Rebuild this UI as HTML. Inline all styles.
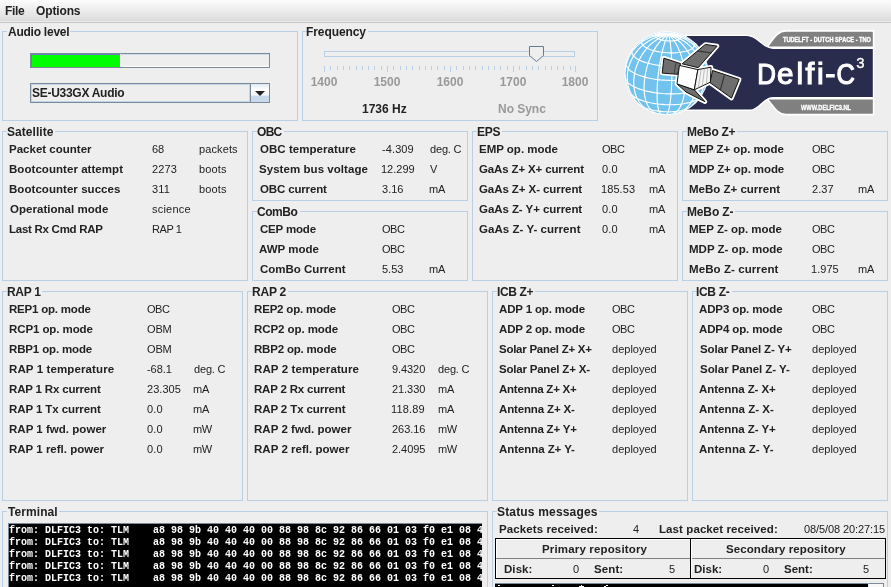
<!DOCTYPE html><html><head><meta charset="utf-8"><style>
*{margin:0;padding:0;box-sizing:border-box}
html,body{width:891px;height:587px;overflow:hidden;background:#eeeeee;font-family:"Liberation Sans",sans-serif;color:#222}
.a{position:absolute;white-space:pre}
.pb{position:absolute;border:1px solid #b8cfe5}
.tt{position:absolute;font:bold 12px/14px "Liberation Sans",sans-serif;white-space:nowrap}
.l,.v,.tt{will-change:transform}
.l{position:absolute;font:bold 11.5px/14px "Liberation Sans",sans-serif;white-space:nowrap}
.v{position:absolute;font:11px/14px "Liberation Sans",sans-serif;white-space:nowrap}
</style></head><body><div class="a" style="left:0;top:0;width:891px;height:21px;background:linear-gradient(#fcfcfc,#dcdcdc)"></div>
<div class="a" style="left:0;top:21px;width:891px;height:1px;background:#ebebeb"></div>
<div class="a" style="left:0;top:22px;width:891px;height:1px;background:#c6c6c6"></div>
<div id="t0" class="l" style="left:5.05px;top:4px;letter-spacing:-0.304px;font-size:12px">File</div>
<div id="t1" class="l" style="left:35.83px;top:4px;letter-spacing:-0.134px;font-size:12px">Options</div>
<div class="pb" style="left:2px;top:31px;width:296px;height:90px"></div>
<div class="a" style="left:7px;top:30px;height:3px;background:#eeeeee;width:63px;"></div>
<div id="t2" class="tt" style="left:7.93px;top:25px;letter-spacing:-0.243px;">Audio level</div>
<div class="a" style="left:30px;top:53px;width:240px;height:15px;border:1px solid #7a8a99;background:#eeeeee"></div>
<div class="a" style="left:121px;top:54px;width:148px;height:1px;background:#cddcec"></div>
<div class="a" style="left:121px;top:66px;width:148px;height:1px;background:#ffffff"></div>
<div class="a" style="left:31px;top:54px;width:89px;height:13px;background:#00ff00;border-top:1px solid #6b7cc4;border-left:1px solid #6b7cc4"></div>
<div class="a" style="left:120px;top:54px;width:1px;height:13px;background:#ffffff"></div>
<div class="a" style="left:30px;top:83px;width:240px;height:20px;border:1px solid #7a8a99;background:#eeeeee;box-shadow:inset 1px 1px 0 #c2d6ea,inset -1px -1px 0 #c2d6ea"></div>
<div class="a" style="left:250px;top:83px;width:20px;height:20px;border:1px solid #7a8a99;background:linear-gradient(#dde8f3 0px,#f2f6fa 3px,#ffffff 6px,#ffffff 8px,#e4edf5 12px,#e4edf5 12.5px,#c8daeb 12.5px,#c8daeb 100%)"></div>
<div class="a" style="left:249px;top:84px;width:1px;height:18px;background:#c2d6ea"></div>
<svg class="a" style="left:254px;top:90px" width="12" height="7"><path d="M1 1 L11 1 L6 6 Z" fill="#222"/></svg>
<div id="t3" class="l" style="left:31.76px;top:86px;letter-spacing:-0.281px;font-size:12px">SE-U33GX Audio</div>
<div class="pb" style="left:302px;top:31px;width:296px;height:90px"></div>
<div class="a" style="left:307px;top:30px;height:3px;background:#eeeeee;width:61px;"></div>
<div id="t4" class="tt" style="left:306.35px;top:25px;letter-spacing:-0.082px;">Frequency</div>
<div class="a" style="left:324px;top:51px;width:251px;height:6px;border:1px solid #b8cfe5"></div>
<svg class="a" style="left:0;top:0" width="891" height="120"><rect x="324" y="66" width="1" height="6" fill="#b8cfe5"/><rect x="330" y="66" width="1" height="4" fill="#b8cfe5"/><rect x="337" y="66" width="1" height="4" fill="#b8cfe5"/><rect x="343" y="66" width="1" height="4" fill="#b8cfe5"/><rect x="349" y="66" width="1" height="4" fill="#b8cfe5"/><rect x="356" y="66" width="1" height="4" fill="#b8cfe5"/><rect x="362" y="66" width="1" height="4" fill="#b8cfe5"/><rect x="368" y="66" width="1" height="4" fill="#b8cfe5"/><rect x="374" y="66" width="1" height="4" fill="#b8cfe5"/><rect x="381" y="66" width="1" height="4" fill="#b8cfe5"/><rect x="387" y="66" width="1" height="6" fill="#b8cfe5"/><rect x="393" y="66" width="1" height="4" fill="#b8cfe5"/><rect x="400" y="66" width="1" height="4" fill="#b8cfe5"/><rect x="406" y="66" width="1" height="4" fill="#b8cfe5"/><rect x="412" y="66" width="1" height="4" fill="#b8cfe5"/><rect x="419" y="66" width="1" height="4" fill="#b8cfe5"/><rect x="425" y="66" width="1" height="4" fill="#b8cfe5"/><rect x="431" y="66" width="1" height="4" fill="#b8cfe5"/><rect x="437" y="66" width="1" height="4" fill="#b8cfe5"/><rect x="444" y="66" width="1" height="4" fill="#b8cfe5"/><rect x="450" y="66" width="1" height="6" fill="#b8cfe5"/><rect x="456" y="66" width="1" height="4" fill="#b8cfe5"/><rect x="463" y="66" width="1" height="4" fill="#b8cfe5"/><rect x="469" y="66" width="1" height="4" fill="#b8cfe5"/><rect x="475" y="66" width="1" height="4" fill="#b8cfe5"/><rect x="482" y="66" width="1" height="4" fill="#b8cfe5"/><rect x="488" y="66" width="1" height="4" fill="#b8cfe5"/><rect x="494" y="66" width="1" height="4" fill="#b8cfe5"/><rect x="500" y="66" width="1" height="4" fill="#b8cfe5"/><rect x="507" y="66" width="1" height="4" fill="#b8cfe5"/><rect x="513" y="66" width="1" height="6" fill="#b8cfe5"/><rect x="519" y="66" width="1" height="4" fill="#b8cfe5"/><rect x="526" y="66" width="1" height="4" fill="#b8cfe5"/><rect x="532" y="66" width="1" height="4" fill="#b8cfe5"/><rect x="538" y="66" width="1" height="4" fill="#b8cfe5"/><rect x="545" y="66" width="1" height="4" fill="#b8cfe5"/><rect x="551" y="66" width="1" height="4" fill="#b8cfe5"/><rect x="557" y="66" width="1" height="4" fill="#b8cfe5"/><rect x="563" y="66" width="1" height="4" fill="#b8cfe5"/><rect x="570" y="66" width="1" height="4" fill="#b8cfe5"/><rect x="575" y="66" width="1" height="6" fill="#b8cfe5"/></svg>
<div class="l" style="left:304.0px;top:75px;width:40px;text-align:center;color:#999999;font-size:12px">1400</div>
<div class="l" style="left:367.0px;top:75px;width:40px;text-align:center;color:#999999;font-size:12px">1500</div>
<div class="l" style="left:430.0px;top:75px;width:40px;text-align:center;color:#999999;font-size:12px">1600</div>
<div class="l" style="left:493.0px;top:75px;width:40px;text-align:center;color:#999999;font-size:12px">1700</div>
<div class="l" style="left:555.0px;top:75px;width:40px;text-align:center;color:#999999;font-size:12px">1800</div>
<svg class="a" style="left:528px;top:45px" width="18" height="18"><path d="M1.5 1.5 H15.5 V10.5 L8.5 16.5 L1.5 10.5 Z" fill="#eeeeee" stroke="#637c93" stroke-width="1"/></svg>
<div id="t5" class="l" style="left:362.38px;top:102px;font-size:12px">1736 Hz</div>
<div id="t6" class="l" style="left:498.15px;top:102px;letter-spacing:-0.031px;font-size:12px;color:#999999">No Sync</div>
<div class="pb" style="left:2px;top:131px;width:246px;height:150px"></div>
<div class="a" style="left:7px;top:130px;height:3px;background:#eeeeee;width:48px;"></div>
<div id="t7" class="tt" style="left:6.66px;top:125px;letter-spacing:0.042px;">Satellite</div>
<div id="t8" class="l" style="left:9.32px;top:142px;letter-spacing:0.011px;">Packet counter</div>
<div id="t9" class="v" style="left:151.60px;top:142px;">68</div>
<div id="t10" class="v" style="left:198.73px;top:142px;letter-spacing:0.106px;">packets</div>
<div id="t11" class="l" style="left:9.32px;top:162px;letter-spacing:0.051px;">Bootcounter attempt</div>
<div id="t12" class="v" style="left:152.00px;top:162px;letter-spacing:0.094px;">2273</div>
<div id="t13" class="v" style="left:198.77px;top:162px;letter-spacing:0.147px;">boots</div>
<div id="t14" class="l" style="left:9.32px;top:182px;letter-spacing:0.049px;">Bootcounter succes</div>
<div id="t15" class="v" style="left:152.25px;top:182px;letter-spacing:0.164px;">311</div>
<div id="t16" class="v" style="left:198.77px;top:182px;letter-spacing:0.147px;">boots</div>
<div id="t17" class="l" style="left:9.89px;top:202px;letter-spacing:0.034px;">Operational mode</div>
<div id="t18" class="v" style="left:151.51px;top:202px;letter-spacing:0.216px;">science</div>
<div id="t19" class="l" style="left:9.32px;top:222px;letter-spacing:-0.267px;">Last Rx Cmd RAP</div>
<div id="t20" class="v" style="left:151.71px;top:222px;letter-spacing:-0.421px;">RAP 1</div>
<div class="pb" style="left:252px;top:131px;width:216px;height:70px"></div>
<div class="a" style="left:257px;top:130px;height:3px;background:#eeeeee;width:27px;"></div>
<div id="t21" class="tt" style="left:257.00px;top:125px;letter-spacing:-0.702px;">OBC</div>
<div id="t22" class="l" style="left:259.89px;top:142px;letter-spacing:0.048px;">OBC temperature</div>
<div id="t23" class="v" style="left:381.99px;top:142px;letter-spacing:0.104px;">-4.309</div>
<div id="t24" class="v" style="left:429.58px;top:142px;letter-spacing:-0.172px;">deg. C</div>
<div id="t25" class="l" style="left:259.06px;top:162px;letter-spacing:0.053px;">System bus voltage</div>
<div id="t26" class="v" style="left:381.49px;top:162px;letter-spacing:-0.001px;">12.299</div>
<div id="t27" class="v" style="left:429.54px;top:162px;">V</div>
<div id="t28" class="l" style="left:259.89px;top:182px;letter-spacing:-0.152px;">OBC current</div>
<div id="t29" class="v" style="left:382.36px;top:182px;letter-spacing:0.009px;">3.16</div>
<div id="t30" class="v" style="left:429.31px;top:182px;letter-spacing:-0.197px;">mA</div>
<div class="pb" style="left:252px;top:211px;width:216px;height:70px"></div>
<div class="a" style="left:257px;top:210px;height:3px;background:#eeeeee;width:43px;"></div>
<div id="t31" class="tt" style="left:257.00px;top:205px;letter-spacing:-0.449px;">ComBo</div>
<div id="t32" class="l" style="left:259.89px;top:222px;letter-spacing:-0.183px;">CEP mode</div>
<div id="t33" class="v" style="left:381.99px;top:222px;letter-spacing:-0.487px;">OBC</div>
<div id="t34" class="l" style="left:259.06px;top:242px;letter-spacing:-0.005px;">AWP mode</div>
<div id="t35" class="v" style="left:381.99px;top:242px;letter-spacing:-0.487px;">OBC</div>
<div id="t36" class="l" style="left:259.89px;top:262px;letter-spacing:-0.002px;">ComBo Current</div>
<div id="t37" class="v" style="left:382.27px;top:262px;">5.53</div>
<div id="t38" class="v" style="left:429.31px;top:262px;letter-spacing:-0.197px;">mA</div>
<div class="pb" style="left:472px;top:131px;width:206px;height:150px"></div>
<div class="a" style="left:477px;top:130px;height:3px;background:#eeeeee;width:25px;"></div>
<div id="t39" class="tt" style="left:477.13px;top:125px;letter-spacing:-0.241px;">EPS</div>
<div id="t40" class="l" style="left:479.29px;top:142px;letter-spacing:-0.013px;">EMP op. mode</div>
<div id="t41" class="v" style="left:601.99px;top:142px;letter-spacing:-0.487px;">OBC</div>
<div id="t42" class="l" style="left:478.71px;top:162px;letter-spacing:-0.139px;">GaAs Z+ X+ current</div>
<div id="t43" class="v" style="left:601.75px;top:162px;letter-spacing:0.148px;">0.0</div>
<div id="t44" class="v" style="left:649.31px;top:162px;letter-spacing:-0.197px;">mA</div>
<div id="t45" class="l" style="left:478.71px;top:182px;letter-spacing:-0.076px;">GaAs Z+ X- current</div>
<div id="t46" class="v" style="left:601.49px;top:182px;letter-spacing:0.088px;">185.53</div>
<div id="t47" class="v" style="left:649.31px;top:182px;letter-spacing:-0.197px;">mA</div>
<div id="t48" class="l" style="left:478.71px;top:202px;letter-spacing:-0.065px;">GaAs Z- Y+ current</div>
<div id="t49" class="v" style="left:601.75px;top:202px;letter-spacing:0.148px;">0.0</div>
<div id="t50" class="v" style="left:649.31px;top:202px;letter-spacing:-0.197px;">mA</div>
<div id="t51" class="l" style="left:478.71px;top:222px;letter-spacing:0.041px;">GaAs Z- Y- current</div>
<div id="t52" class="v" style="left:601.75px;top:222px;letter-spacing:0.148px;">0.0</div>
<div id="t53" class="v" style="left:649.31px;top:222px;letter-spacing:-0.197px;">mA</div>
<div class="pb" style="left:682px;top:131px;width:206px;height:70px"></div>
<div class="a" style="left:687px;top:130px;height:3px;background:#eeeeee;width:50px;"></div>
<div id="t54" class="tt" style="left:687.39px;top:125px;letter-spacing:-0.318px;">MeBo Z+</div>
<div id="t55" class="l" style="left:689.29px;top:142px;letter-spacing:-0.082px;">MEP Z+ op. mode</div>
<div id="t56" class="v" style="left:812.01px;top:142px;letter-spacing:-0.487px;">OBC</div>
<div id="t57" class="l" style="left:689.29px;top:162px;letter-spacing:-0.097px;">MDP Z+ op. mode</div>
<div id="t58" class="v" style="left:812.01px;top:162px;letter-spacing:-0.487px;">OBC</div>
<div id="t59" class="l" style="left:689.29px;top:182px;letter-spacing:-0.003px;">MeBo Z+ current</div>
<div id="t60" class="v" style="left:812.00px;top:182px;letter-spacing:0.031px;">2.37</div>
<div id="t61" class="v" style="left:858.31px;top:182px;letter-spacing:-0.197px;">mA</div>
<div class="pb" style="left:682px;top:211px;width:206px;height:70px"></div>
<div class="a" style="left:687px;top:210px;height:3px;background:#eeeeee;width:48px;"></div>
<div id="t62" class="tt" style="left:687.39px;top:205px;letter-spacing:-0.150px;">MeBo Z-</div>
<div id="t63" class="l" style="left:689.29px;top:222px;letter-spacing:-0.008px;">MEP Z- op. mode</div>
<div id="t64" class="v" style="left:812.01px;top:222px;letter-spacing:-0.487px;">OBC</div>
<div id="t65" class="l" style="left:689.29px;top:242px;letter-spacing:0.004px;">MDP Z- op. mode</div>
<div id="t66" class="v" style="left:812.01px;top:242px;letter-spacing:-0.487px;">OBC</div>
<div id="t67" class="l" style="left:689.29px;top:262px;letter-spacing:0.084px;">MeBo Z- current</div>
<div id="t68" class="v" style="left:811.41px;top:262px;letter-spacing:0.045px;">1.975</div>
<div id="t69" class="v" style="left:858.31px;top:262px;letter-spacing:-0.197px;">mA</div>
<div class="pb" style="left:2px;top:291px;width:241px;height:210px"></div>
<div class="a" style="left:7px;top:290px;height:3px;background:#eeeeee;width:35px;"></div>
<div id="t70" class="tt" style="left:7.40px;top:285px;letter-spacing:-0.326px;">RAP 1</div>
<div id="t71" class="l" style="left:9.02px;top:302px;letter-spacing:-0.208px;">REP1 op. mode</div>
<div id="t72" class="v" style="left:146.99px;top:302px;letter-spacing:-0.487px;">OBC</div>
<div id="t73" class="l" style="left:9.02px;top:322px;letter-spacing:-0.090px;">RCP1 op. mode</div>
<div id="t74" class="v" style="left:146.99px;top:322px;letter-spacing:-0.153px;">OBM</div>
<div id="t75" class="l" style="left:9.02px;top:342px;letter-spacing:-0.144px;">RBP1 op. mode</div>
<div id="t76" class="v" style="left:146.99px;top:342px;letter-spacing:-0.153px;">OBM</div>
<div id="t77" class="l" style="left:9.02px;top:362px;letter-spacing:0.112px;">RAP 1 temperature</div>
<div id="t78" class="v" style="left:146.99px;top:362px;letter-spacing:-0.047px;">-68.1</div>
<div id="t79" class="v" style="left:194.21px;top:362px;letter-spacing:-0.172px;">deg. C</div>
<div id="t80" class="l" style="left:9.02px;top:382px;letter-spacing:-0.174px;">RAP 1 Rx current</div>
<div id="t81" class="v" style="left:147.05px;top:382px;letter-spacing:0.034px;">23.305</div>
<div id="t82" class="v" style="left:193.31px;top:382px;letter-spacing:-0.197px;">mA</div>
<div id="t83" class="l" style="left:9.02px;top:402px;letter-spacing:-0.092px;">RAP 1 Tx current</div>
<div id="t84" class="v" style="left:146.75px;top:402px;letter-spacing:0.148px;">0.0</div>
<div id="t85" class="v" style="left:193.31px;top:402px;letter-spacing:-0.197px;">mA</div>
<div id="t86" class="l" style="left:9.02px;top:422px;letter-spacing:0.024px;">RAP 1 fwd. power</div>
<div id="t87" class="v" style="left:146.75px;top:422px;letter-spacing:0.148px;">0.0</div>
<div id="t88" class="v" style="left:193.31px;top:422px;letter-spacing:-0.523px;">mW</div>
<div id="t89" class="l" style="left:9.02px;top:442px;letter-spacing:0.003px;">RAP 1 refl. power</div>
<div id="t90" class="v" style="left:146.75px;top:442px;letter-spacing:0.148px;">0.0</div>
<div id="t91" class="v" style="left:193.31px;top:442px;letter-spacing:-0.523px;">mW</div>
<div class="pb" style="left:247px;top:291px;width:241px;height:210px"></div>
<div class="a" style="left:252px;top:290px;height:3px;background:#eeeeee;width:36px;"></div>
<div id="t92" class="tt" style="left:252.09px;top:285px;letter-spacing:-0.213px;">RAP 2</div>
<div id="t93" class="l" style="left:254.07px;top:302px;letter-spacing:-0.174px;">REP2 op. mode</div>
<div id="t94" class="v" style="left:391.99px;top:302px;letter-spacing:-0.487px;">OBC</div>
<div id="t95" class="l" style="left:254.07px;top:322px;letter-spacing:-0.067px;">RCP2 op. mode</div>
<div id="t96" class="v" style="left:391.99px;top:322px;letter-spacing:-0.487px;">OBC</div>
<div id="t97" class="l" style="left:254.07px;top:342px;letter-spacing:-0.193px;">RBP2 op. mode</div>
<div id="t98" class="v" style="left:391.99px;top:342px;letter-spacing:-0.487px;">OBC</div>
<div id="t99" class="l" style="left:254.07px;top:362px;letter-spacing:0.099px;">RAP 2 temperature</div>
<div id="t100" class="v" style="left:392.00px;top:362px;letter-spacing:-0.074px;">9.4320</div>
<div id="t101" class="v" style="left:438.38px;top:362px;letter-spacing:-0.172px;">deg. C</div>
<div id="t102" class="l" style="left:254.07px;top:382px;letter-spacing:-0.200px;">RAP 2 Rx current</div>
<div id="t103" class="v" style="left:392.05px;top:382px;letter-spacing:-0.071px;">21.330</div>
<div id="t104" class="v" style="left:437.80px;top:382px;letter-spacing:-0.197px;">mA</div>
<div id="t105" class="l" style="left:254.07px;top:402px;letter-spacing:-0.103px;">RAP 2 Tx current</div>
<div id="t106" class="v" style="left:391.49px;top:402px;letter-spacing:0.166px;">118.89</div>
<div id="t107" class="v" style="left:437.80px;top:402px;letter-spacing:-0.197px;">mA</div>
<div id="t108" class="l" style="left:254.07px;top:422px;letter-spacing:0.038px;">RAP 2 fwd. power</div>
<div id="t109" class="v" style="left:392.05px;top:422px;letter-spacing:-0.045px;">263.16</div>
<div id="t110" class="v" style="left:437.80px;top:422px;letter-spacing:-0.523px;">mW</div>
<div id="t111" class="l" style="left:254.07px;top:442px;letter-spacing:0.027px;">RAP 2 refl. power</div>
<div id="t112" class="v" style="left:392.05px;top:442px;letter-spacing:-0.053px;">2.4095</div>
<div id="t113" class="v" style="left:437.80px;top:442px;letter-spacing:-0.523px;">mW</div>
<div class="pb" style="left:492px;top:291px;width:196px;height:210px"></div>
<div class="a" style="left:497px;top:290px;height:3px;background:#eeeeee;width:38px;"></div>
<div id="t114" class="tt" style="left:497.06px;top:285px;letter-spacing:-0.355px;">ICB Z+</div>
<div id="t115" class="l" style="left:498.98px;top:302px;letter-spacing:-0.145px;">ADP 1 op. mode</div>
<div id="t116" class="v" style="left:611.99px;top:302px;letter-spacing:-0.487px;">OBC</div>
<div id="t117" class="l" style="left:498.98px;top:322px;letter-spacing:-0.145px;">ADP 2 op. mode</div>
<div id="t118" class="v" style="left:611.99px;top:322px;letter-spacing:-0.487px;">OBC</div>
<div id="t119" class="l" style="left:499.18px;top:342px;letter-spacing:-0.260px;">Solar Panel Z+ X+</div>
<div id="t120" class="v" style="left:612.42px;top:342px;letter-spacing:0.012px;">deployed</div>
<div id="t121" class="l" style="left:499.18px;top:362px;letter-spacing:-0.207px;">Solar Panel Z+ X-</div>
<div id="t122" class="v" style="left:612.42px;top:362px;letter-spacing:0.012px;">deployed</div>
<div id="t123" class="l" style="left:498.98px;top:382px;letter-spacing:-0.232px;">Antenna Z+ X+</div>
<div id="t124" class="v" style="left:612.42px;top:382px;letter-spacing:0.012px;">deployed</div>
<div id="t125" class="l" style="left:498.98px;top:402px;letter-spacing:-0.147px;">Antenna Z+ X-</div>
<div id="t126" class="v" style="left:612.42px;top:402px;letter-spacing:0.012px;">deployed</div>
<div id="t127" class="l" style="left:498.98px;top:422px;letter-spacing:-0.201px;">Antenna Z+ Y+</div>
<div id="t128" class="v" style="left:612.42px;top:422px;letter-spacing:0.012px;">deployed</div>
<div id="t129" class="l" style="left:498.98px;top:442px;letter-spacing:-0.071px;">Antenna Z+ Y-</div>
<div id="t130" class="v" style="left:612.42px;top:442px;letter-spacing:0.012px;">deployed</div>
<div class="pb" style="left:692px;top:291px;width:196px;height:210px"></div>
<div class="a" style="left:697px;top:290px;height:3px;background:#eeeeee;width:35px;"></div>
<div id="t131" class="tt" style="left:696.31px;top:285px;letter-spacing:-0.333px;">ICB Z-</div>
<div id="t132" class="l" style="left:699.48px;top:302px;letter-spacing:-0.121px;">ADP3 op. mode</div>
<div id="t133" class="v" style="left:811.63px;top:302px;letter-spacing:-0.487px;">OBC</div>
<div id="t134" class="l" style="left:699.48px;top:322px;letter-spacing:-0.121px;">ADP4 op. mode</div>
<div id="t135" class="v" style="left:811.63px;top:322px;letter-spacing:-0.487px;">OBC</div>
<div id="t136" class="l" style="left:699.56px;top:342px;letter-spacing:-0.149px;">Solar Panel Z- Y+</div>
<div id="t137" class="v" style="left:811.97px;top:342px;letter-spacing:0.012px;">deployed</div>
<div id="t138" class="l" style="left:699.56px;top:362px;letter-spacing:-0.039px;">Solar Panel Z- Y-</div>
<div id="t139" class="v" style="left:811.97px;top:362px;letter-spacing:0.012px;">deployed</div>
<div id="t140" class="l" style="left:699.48px;top:382px;letter-spacing:-0.068px;">Antenna Z- X+</div>
<div id="t141" class="v" style="left:811.97px;top:382px;letter-spacing:0.012px;">deployed</div>
<div id="t142" class="l" style="left:699.48px;top:402px;letter-spacing:-0.002px;">Antenna Z- X-</div>
<div id="t143" class="v" style="left:811.97px;top:402px;letter-spacing:0.012px;">deployed</div>
<div id="t144" class="l" style="left:699.48px;top:422px;letter-spacing:-0.052px;">Antenna Z- Y+</div>
<div id="t145" class="v" style="left:811.97px;top:422px;letter-spacing:0.012px;">deployed</div>
<div id="t146" class="l" style="left:699.48px;top:442px;letter-spacing:0.065px;">Antenna Z- Y-</div>
<div id="t147" class="v" style="left:811.97px;top:442px;letter-spacing:0.012px;">deployed</div>
<div class="pb" style="left:2px;top:511px;width:486px;height:90px"></div>
<div class="a" style="left:7px;top:510px;height:3px;background:#eeeeee;width:52px;"></div>
<div id="t148" class="tt" style="left:7.92px;top:505px;letter-spacing:0.069px;">Terminal</div>
<div class="a" style="left:8px;top:523px;width:474px;height:70px;background:#000;border-top:1px solid #7a8a99;border-left:1px solid #7a8a99;overflow:hidden">
<div class="a" style="left:0px;top:1px;font:bold 10px/12px 'Liberation Mono',monospace;letter-spacing:0px;color:#fff;will-change:transform">from: DLFIC3 to: TLM    a8 98 9b 40 40 40 00 88 98 8c 92 86 66 01 03 f0 e1 08 4c 00</div>
<div class="a" style="left:0px;top:13px;font:bold 10px/12px 'Liberation Mono',monospace;letter-spacing:0px;color:#fff;will-change:transform">from: DLFIC3 to: TLM    a8 98 9b 40 40 40 00 88 98 8c 92 86 66 01 03 f0 e1 08 4c 00</div>
<div class="a" style="left:0px;top:25px;font:bold 10px/12px 'Liberation Mono',monospace;letter-spacing:0px;color:#fff;will-change:transform">from: DLFIC3 to: TLM    a8 98 9b 40 40 40 00 88 98 8c 92 86 66 01 03 f0 e1 08 4c 00</div>
<div class="a" style="left:0px;top:37px;font:bold 10px/12px 'Liberation Mono',monospace;letter-spacing:0px;color:#fff;will-change:transform">from: DLFIC3 to: TLM    a8 98 9b 40 40 40 00 88 98 8c 92 86 66 01 03 f0 e1 08 4c 00</div>
<div class="a" style="left:0px;top:49px;font:bold 10px/12px 'Liberation Mono',monospace;letter-spacing:0px;color:#fff;will-change:transform">from: DLFIC3 to: TLM    a8 98 9b 40 40 40 00 88 98 8c 92 86 66 01 03 f0 e1 08 4c 00</div>
</div>
<div class="pb" style="left:492px;top:511px;width:396px;height:90px"></div>
<div class="a" style="left:497px;top:510px;height:3px;background:#eeeeee;width:102px;"></div>
<div id="t149" class="tt" style="left:496.83px;top:505px;letter-spacing:0.174px;">Status messages</div>
<div id="t150" class="l" style="left:499.32px;top:522px;letter-spacing:0.100px;">Packets received:</div>
<div id="t151" class="v" style="left:633.28px;top:522px;">4</div>
<div id="t152" class="l" style="left:659.23px;top:522px;letter-spacing:0.089px;">Last packet received:</div>
<div id="t153" class="v" style="left:803.68px;top:522px;letter-spacing:-0.098px;">08/5/08 20:27:15</div>
<div class="a" style="left:495px;top:538px;width:391px;height:41px;border:1px solid #000;box-shadow:inset 1px 1px 0 #ffffff"></div>
<div class="a" style="left:496px;top:558px;width:389px;height:1px;background:#808080"></div>
<div class="a" style="left:690px;top:539px;width:1px;height:39px;background:#000"></div>
<div class="a" style="left:691px;top:539px;width:1px;height:39px;background:#ffffff"></div>
<div id="t154" class="l" style="left:542.06px;top:542px;letter-spacing:0.157px;">Primary repository</div>
<div id="t155" class="l" style="left:725.56px;top:542px;letter-spacing:0.078px;">Secondary repository</div>
<div id="t156" class="l" style="left:504.32px;top:562px;letter-spacing:0.064px;">Disk:</div>
<div id="t157" class="v" style="left:573.33px;top:562px;">0</div>
<div id="t158" class="l" style="left:593.88px;top:562px;letter-spacing:0.102px;">Sent:</div>
<div id="t159" class="v" style="left:668.55px;top:562px;">5</div>
<div id="t160" class="l" style="left:694.07px;top:562px;">Disk:</div>
<div id="t161" class="v" style="left:763.18px;top:562px;">0</div>
<div id="t162" class="l" style="left:783.88px;top:562px;">Sent:</div>
<div id="t163" class="v" style="left:863.27px;top:562px;">5</div>
<div class="a" style="left:495px;top:583px;width:373px;height:10px;background:#000;border-top:1px solid #7a8a99"></div>
<div class="a" style="left:868px;top:583px;width:16px;height:10px;background:#f8f8f8;border:1px solid #7a8a99;border-left:1px solid #e0e8f0"></div>
<div class="a" style="left:498px;top:585px;width:2px;height:1px;background:#fff"></div>
<div class="a" style="left:552px;top:585px;width:2px;height:1px;background:#fff"></div>
<div class="a" style="left:581px;top:585px;width:1px;height:1px;background:#fff"></div>
<div class="a" style="left:579px;top:586px;width:5px;height:1px;background:#fff"></div>
<div class="a" style="left:606px;top:585px;width:2px;height:1px;background:#fff"></div>
<div class="a" style="left:604px;top:586px;width:2px;height:1px;background:#fff"></div>
<svg class="a" style="left:620px;top:25px" width="262" height="95" viewBox="0 0 262 95"><path d="M146.5,22.4 C152,17 156,5.899999999999999 166,5.899999999999999 L253.60000000000002,5.899999999999999 L253.60000000000002,22.4 Z" fill="#808080" stroke="#ffffff" stroke-width="1.6"/><path d="M146.5,73.7 C152,78 156,89.6 166,89.6 L253.60000000000002,89.6 L253.60000000000002,73.7 Z" fill="#808080" stroke="#ffffff" stroke-width="1.6"/><path d="M66,10.399999999999999 L127,10.399999999999999 C138,10.399999999999999 142,23.200000000000003 153,23.200000000000003 L253.5,23.200000000000003 L253.5,72.7 L153,72.7 C142,72.7 140,85.2 130,85.2 L66,85.2 Z" fill="#2a2c4e" stroke="#ffffff" stroke-width="1.4"/><circle cx="46.5" cy="48.2" r="42.0" fill="#ffffff"/><circle cx="46.5" cy="48.2" r="41.0" fill="#72c2ee"/><clipPath id="gc"><circle cx="46.5" cy="48.2" r="41.0"/></clipPath><path clip-path="url(#gc)" d="M46.4,89.2 L46.7,89.1 L47.0,88.9 L47.2,88.6 L47.5,88.2 L47.8,87.7 L48.1,87.0 L48.3,86.3 L48.6,85.4 L48.8,84.5 L49.1,83.4 L49.3,82.3 L49.6,81.0 L49.8,79.7 L50.0,78.3 L50.2,76.8 L50.4,75.2 L50.6,73.6 L50.8,71.8 L50.9,70.1 L51.1,68.2 L51.2,66.3 L51.4,64.4 L51.5,62.4 L51.6,60.3 L51.7,58.3 L51.7,56.2 L51.8,54.1 L51.8,51.9 L51.9,49.8 L51.9,47.6 L51.9,45.5 L51.8,43.4 L51.8,41.2 L51.8,39.1 L51.7,37.0 L51.6,35.0 L51.5,33.0 L51.4,31.0 L51.3,29.1 L51.2,27.2 L51.1,25.4 L50.9,23.6 L50.7,22.0 L50.6,20.4 L50.4,18.8 L50.2,17.4 L50.0,16.0 L49.7,14.7 L49.5,13.5 L49.3,12.4 L49.0,11.4 L48.8,10.5 L48.5,9.7 M52.2,88.8 L53.1,88.6 L54.0,88.2 L54.9,87.8 L55.8,87.2 L56.6,86.5 L57.4,85.7 L58.2,84.9 L59.0,83.9 L59.7,82.8 L60.3,81.6 L61.0,80.4 L61.6,79.0 L62.1,77.6 L62.6,76.1 L63.1,74.5 L63.5,72.8 L63.9,71.1 L64.2,69.3 L64.5,67.4 L64.8,65.5 L64.9,63.6 L65.1,61.6 L65.2,59.5 L65.2,57.5 L65.2,55.4 L65.1,53.3 L65.0,51.2 L64.8,49.0 L64.6,46.9 L64.3,44.8 L64.0,42.6 L63.6,40.5 L63.2,38.5 L62.7,36.4 L62.2,34.4 L61.7,32.4 L61.1,30.4 L60.4,28.6 L59.8,26.7 L59.0,24.9 L58.3,23.2 L57.5,21.6 L56.7,20.0 L55.9,18.5 L55.0,17.1 L54.2,15.7 L53.3,14.5 L52.3,13.3 L51.4,12.3 L50.4,11.3 L49.5,10.5 L48.5,9.7 M59.7,87.0 L61.1,86.4 L62.5,85.8 L63.8,85.0 L65.0,84.1 L66.2,83.2 L67.4,82.1 L68.5,80.9 L69.5,79.7 L70.5,78.4 L71.4,76.9 L72.3,75.4 L73.0,73.9 L73.7,72.2 L74.3,70.5 L74.9,68.7 L75.4,66.9 L75.8,65.0 L76.1,63.1 L76.3,61.2 L76.4,59.2 L76.5,57.1 L76.5,55.1 L76.4,53.0 L76.2,50.9 L75.9,48.8 L75.6,46.7 L75.2,44.6 L74.7,42.6 L74.1,40.5 L73.4,38.5 L72.7,36.4 L71.9,34.5 L71.0,32.5 L70.1,30.6 L69.1,28.7 L68.0,26.9 L66.9,25.2 L65.7,23.5 L64.5,21.9 L63.2,20.4 L61.9,18.9 L60.5,17.5 L59.1,16.2 L57.7,15.0 L56.2,13.9 L54.7,12.8 L53.2,11.9 L51.6,11.1 L50.1,10.4 L48.5,9.7 M71.7,80.5 L73.2,79.3 L74.5,78.0 L75.8,76.7 L77.0,75.2 L78.1,73.7 L79.2,72.1 L80.1,70.5 L81.0,68.7 L81.7,67.0 L82.4,65.1 L82.9,63.3 L83.4,61.4 L83.8,59.4 L84.0,57.4 L84.2,55.4 L84.2,53.4 L84.2,51.4 L84.0,49.3 L83.8,47.3 L83.4,45.2 L83.0,43.2 L82.4,41.2 L81.7,39.2 L81.0,37.2 L80.1,35.2 L79.2,33.3 L78.2,31.4 L77.1,29.6 L75.9,27.8 L74.6,26.1 L73.2,24.4 L71.8,22.9 L70.3,21.3 L68.7,19.9 L67.1,18.5 L65.4,17.2 L63.7,16.0 L61.9,14.9 L60.1,13.8 L58.2,12.9 L56.3,12.1 L54.4,11.3 L52.4,10.7 L50.5,10.2 L48.5,9.7 M87.2,52.8 L87.4,50.8 L87.4,48.8 L87.4,46.8 L87.2,44.8 L86.9,42.8 L86.5,40.8 L86.0,38.8 L85.4,36.9 L84.7,35.0 L83.9,33.1 L82.9,31.2 L81.9,29.5 L80.8,27.7 L79.5,26.0 L78.2,24.4 L76.8,22.9 L75.4,21.4 L73.8,20.0 L72.2,18.6 L70.5,17.4 L68.7,16.2 L66.9,15.1 L65.0,14.1 L63.0,13.2 L61.1,12.4 L59.0,11.7 L57.0,11.1 L54.9,10.6 L52.8,10.2 L50.7,9.9 L48.5,9.7 M77.0,20.8 L75.6,19.4 L74.2,18.1 L72.7,16.9 L71.2,15.7 L69.5,14.7 L67.8,13.7 L66.1,12.9 L64.3,12.1 L62.4,11.5 L60.5,10.9 L58.6,10.4 L56.6,10.1 L54.6,9.8 L52.6,9.7 L50.6,9.7 L48.5,9.7 M64.6,11.4 L63.1,10.8 L61.6,10.2 L60.1,9.8 L58.5,9.5 L56.9,9.2 L55.3,9.1 L53.6,9.1 L51.9,9.2 L50.2,9.4 L48.5,9.7 M56.4,8.4 L55.3,8.3 L54.2,8.3 L53.1,8.3 L52.0,8.5 L50.8,8.8 L49.7,9.2 L48.5,9.7 M51.3,7.5 L50.8,7.6 L50.4,7.8 L49.9,8.1 L49.5,8.6 L49.0,9.1 L48.5,9.7 M46.9,7.2 L47.2,7.4 L47.4,7.6 L47.7,8.0 L48.0,8.5 L48.3,9.0 L48.5,9.7 M41.7,7.5 L42.7,7.5 L43.6,7.6 L44.6,7.8 L45.6,8.1 L46.6,8.5 L47.5,9.1 L48.5,9.7 M34.7,8.9 L36.2,8.6 L37.7,8.4 L39.2,8.2 L40.7,8.2 L42.2,8.3 L43.8,8.5 L45.4,8.8 L46.9,9.2 L48.5,9.7 M22.8,14.8 L24.3,13.7 L26.0,12.8 L27.7,12.0 L29.4,11.3 L31.2,10.6 L33.0,10.1 L34.9,9.7 L36.8,9.4 L38.7,9.2 L40.6,9.1 L42.6,9.1 L44.6,9.2 L46.5,9.4 L48.5,9.7 M6.0,41.6 L6.4,39.6 L6.9,37.6 L7.5,35.7 L8.2,33.8 L9.0,32.0 L10.0,30.1 L11.0,28.4 L12.1,26.7 L13.3,25.0 L14.6,23.5 L16.0,21.9 L17.5,20.5 L19.0,19.1 L20.6,17.8 L22.3,16.6 L24.1,15.5 L25.9,14.5 L27.8,13.6 L29.7,12.7 L31.7,12.0 L33.7,11.3 L35.8,10.8 L37.9,10.4 L40.0,10.0 L42.1,9.8 L44.2,9.7 L46.4,9.6 L48.5,9.7 M14.8,74.2 L13.6,72.7 L12.6,71.1 L11.6,69.4 L10.7,67.7 L9.9,65.9 L9.2,64.1 L8.6,62.3 L8.1,60.4 L7.8,58.4 L7.5,56.5 L7.3,54.5 L7.3,52.5 L7.3,50.5 L7.5,48.5 L7.8,46.5 L8.1,44.4 L8.6,42.4 L9.2,40.5 L9.9,38.5 L10.7,36.5 L11.5,34.6 L12.5,32.8 L13.6,30.9 L14.8,29.2 L16.0,27.4 L17.3,25.8 L18.7,24.2 L20.2,22.6 L21.8,21.1 L23.4,19.7 L25.1,18.4 L26.9,17.2 L28.7,16.0 L30.5,15.0 L32.4,14.0 L34.3,13.1 L36.3,12.3 L38.3,11.6 L40.3,11.0 L42.4,10.6 L44.4,10.2 L46.5,9.9 L48.5,9.7 M27.0,84.2 L25.6,83.4 L24.3,82.5 L23.1,81.4 L21.9,80.3 L20.8,79.1 L19.8,77.8 L18.8,76.4 L18.0,75.0 L17.2,73.4 L16.4,71.8 L15.8,70.2 L15.2,68.5 L14.8,66.7 L14.4,64.9 L14.1,63.0 L13.9,61.1 L13.8,59.1 L13.7,57.1 L13.8,55.1 L13.9,53.1 L14.2,51.1 L14.5,49.0 L14.9,47.0 L15.4,44.9 L16.0,42.9 L16.7,40.9 L17.4,38.9 L18.3,36.9 L19.2,35.0 L20.2,33.1 L21.2,31.2 L22.3,29.4 L23.5,27.6 L24.8,25.9 L26.1,24.2 L27.5,22.7 L28.9,21.1 L30.4,19.7 L31.9,18.3 L33.4,17.1 L35.0,15.9 L36.7,14.8 L38.3,13.8 L40.0,12.8 L41.7,12.0 L43.4,11.3 L45.1,10.7 L46.8,10.1 L48.5,9.7 M35.6,87.7 L34.6,87.4 L33.6,86.9 L32.7,86.3 L31.7,85.6 L30.9,84.9 L30.1,84.0 L29.3,83.0 L28.6,81.9 L27.9,80.8 L27.3,79.5 L26.7,78.2 L26.2,76.7 L25.7,75.2 L25.3,73.7 L24.9,72.0 L24.6,70.3 L24.4,68.5 L24.2,66.7 L24.1,64.8 L24.1,62.9 L24.1,60.9 L24.2,58.9 L24.3,56.9 L24.5,54.9 L24.8,52.8 L25.1,50.7 L25.5,48.6 L25.9,46.5 L26.4,44.4 L26.9,42.4 L27.5,40.3 L28.2,38.3 L28.9,36.3 L29.6,34.3 L30.4,32.3 L31.3,30.4 L32.1,28.6 L33.1,26.8 L34.0,25.1 L35.0,23.4 L36.0,21.8 L37.1,20.2 L38.2,18.8 L39.3,17.4 L40.4,16.1 L41.5,14.9 L42.7,13.8 L43.8,12.8 L45.0,11.9 L46.2,11.1 L47.3,10.3 L48.5,9.7 M41.3,88.9 L40.9,88.7 L40.5,88.5 L40.1,88.1 L39.8,87.7 L39.4,87.1 L39.1,86.4 L38.8,85.7 L38.5,84.8 L38.3,83.8 L38.1,82.7 L37.8,81.5 L37.7,80.3 L37.5,78.9 L37.4,77.5 L37.2,76.0 L37.2,74.4 L37.1,72.7 L37.1,71.0 L37.1,69.2 L37.1,67.3 L37.1,65.4 L37.2,63.4 L37.3,61.5 L37.4,59.4 L37.5,57.4 L37.7,55.3 L37.9,53.2 L38.1,51.0 L38.3,48.9 L38.6,46.8 L38.9,44.7 L39.2,42.5 L39.5,40.4 L39.9,38.4 L40.2,36.3 L40.6,34.3 L41.0,32.3 L41.4,30.4 L41.8,28.5 L42.3,26.6 L42.7,24.9 L43.2,23.1 L43.6,21.5 L44.1,19.9 L44.6,18.4 L45.1,17.0 L45.6,15.7 L46.1,14.5 L46.6,13.3 L47.0,12.3 L47.5,11.3 L48.0,10.5 L48.5,9.7 M44.5,86.7 L46.3,86.7 L48.2,86.8 L50.0,86.8 L51.8,86.7 L53.5,86.6 L55.2,86.5 L56.9,86.3 L58.5,86.0 L60.0,85.8 L61.5,85.5 L62.9,85.1 L64.2,84.7 L65.4,84.3 L66.5,83.9 L67.5,83.4 L68.4,82.9 M21.1,80.4 L21.9,81.0 L22.9,81.6 L23.9,82.1 L25.1,82.7 L26.3,83.2 L27.7,83.7 L29.1,84.1 L30.6,84.6 L32.2,85.0 L33.8,85.3 L35.5,85.7 L37.2,85.9 L39.0,86.2 L40.8,86.4 L42.6,86.6 L44.5,86.7 M44.9,79.6 L47.3,79.7 L49.8,79.7 L52.2,79.7 L54.7,79.6 L57.0,79.5 L59.3,79.3 L61.6,79.0 L63.7,78.7 L65.8,78.3 L67.8,77.9 L69.7,77.5 L71.4,76.9 L73.0,76.4 L74.5,75.8 L75.9,75.1 L77.1,74.4 L78.1,73.7 L79.0,73.0 L79.7,72.2 M10.9,68.6 L11.6,69.4 L12.4,70.3 L13.3,71.1 L14.5,71.9 L15.7,72.7 L17.2,73.4 L18.7,74.2 L20.4,74.9 L22.2,75.5 L24.1,76.2 L26.2,76.7 L28.3,77.3 L30.5,77.8 L32.8,78.2 L35.1,78.6 L37.5,78.9 L39.9,79.2 L42.4,79.4 L44.9,79.6 M45.4,68.7 L48.2,68.8 L51.0,68.8 L53.8,68.8 L56.6,68.7 L59.3,68.6 L61.9,68.3 L64.4,68.0 L66.9,67.7 L69.3,67.3 L71.5,66.8 L73.6,66.3 L75.6,65.7 L77.5,65.0 L79.2,64.3 L80.7,63.6 L82.1,62.8 L83.3,62.0 L84.3,61.2 L85.1,60.3 L85.7,59.4 L86.2,58.4 M6.0,54.2 L6.3,55.2 L6.9,56.2 L7.6,57.1 L8.5,58.1 L9.6,59.0 L10.9,59.9 L12.3,60.8 L13.9,61.7 L15.7,62.5 L17.6,63.3 L19.7,64.1 L21.9,64.8 L24.2,65.5 L26.6,66.1 L29.1,66.6 L31.7,67.1 L34.3,67.6 L37.1,67.9 L39.8,68.2 L42.6,68.5 L45.4,68.7 M46.1,55.3 L48.9,55.4 L51.7,55.5 L54.5,55.4 L57.3,55.4 L60.0,55.2 L62.6,55.0 L65.1,54.7 L67.6,54.3 L70.0,53.9 L72.2,53.4 L74.3,52.9 L76.3,52.3 L78.2,51.7 L79.9,51.0 L81.4,50.2 L82.8,49.5 L84.0,48.6 L85.0,47.8 L85.8,46.9 L86.4,46.0 L86.9,45.1 L87.1,44.1 L87.2,43.1 M6.6,38.9 L6.5,39.9 L6.7,40.9 L7.0,41.8 L7.6,42.8 L8.3,43.8 L9.2,44.7 L10.3,45.7 L11.6,46.6 L13.0,47.5 L14.6,48.3 L16.4,49.2 L18.3,50.0 L20.4,50.7 L22.6,51.4 L24.9,52.1 L27.3,52.7 L29.8,53.3 L32.4,53.8 L35.0,54.2 L37.8,54.6 L40.5,54.9 L43.3,55.1 L46.1,55.3 M46.9,41.1 L49.3,41.2 L51.8,41.2 L54.3,41.2 L56.7,41.1 L59.0,41.0 L61.3,40.8 L63.6,40.5 L65.8,40.2 L67.8,39.9 L69.8,39.4 L71.7,39.0 L73.4,38.5 L75.1,37.9 L76.5,37.3 L77.9,36.6 L79.1,35.9 L80.1,35.2 L81.0,34.5 L81.8,33.7 L82.3,32.9 L82.7,32.1 L82.9,31.2 L83.0,30.4 L82.8,29.5 L82.5,28.7 M12.7,25.0 L12.3,25.8 L12.1,26.7 L12.0,27.5 L12.2,28.4 L12.5,29.2 L12.9,30.1 L13.6,30.9 L14.4,31.8 L15.4,32.6 L16.5,33.4 L17.8,34.2 L19.2,35.0 L20.7,35.7 L22.4,36.4 L24.2,37.1 L26.2,37.7 L28.2,38.3 L30.3,38.8 L32.5,39.3 L34.8,39.7 L37.1,40.1 L39.5,40.4 L41.9,40.7 L44.4,40.9 L46.9,41.1 M47.6,27.7 L49.4,27.8 L51.2,27.8 L53.1,27.8 L54.8,27.8 L56.6,27.7 L58.3,27.5 L60.0,27.3 L61.6,27.1 L63.1,26.8 L64.6,26.5 L66.0,26.2 L67.3,25.8 L68.5,25.4 L69.6,24.9 L70.6,24.4 L71.5,23.9 L72.3,23.4 L72.9,22.8 L73.5,22.2 L73.9,21.6 L74.2,21.0 L74.3,20.4 L74.4,19.8 L74.3,19.2 L74.0,18.5 L73.7,17.9 L73.2,17.3 L72.6,16.6 M23.8,14.1 L23.2,14.6 L22.6,15.2 L22.2,15.8 L21.9,16.4 L21.8,17.0 L21.7,17.7 L21.8,18.3 L22.0,18.9 L22.4,19.6 L22.9,20.2 L23.5,20.8 L24.2,21.4 L25.0,22.0 L26.0,22.6 L27.0,23.2 L28.2,23.7 L29.4,24.2 L30.8,24.7 L32.2,25.2 L33.7,25.6 L35.3,26.0 L36.9,26.4 L38.6,26.7 L40.3,27.0 L42.1,27.2 L43.9,27.4 L45.7,27.6 L47.6,27.7 M48.2,15.9 L49.1,16.0 L50.0,16.0 L50.8,16.0 L51.7,16.0 L52.5,15.9 L53.4,15.8 L54.2,15.7 L54.9,15.6 L55.7,15.5 L56.4,15.3 L57.0,15.2 L57.7,15.0 L58.2,14.8 L58.8,14.6 L59.3,14.3 L59.7,14.1 L60.1,13.8 L60.4,13.6 L60.6,13.3 L60.8,13.0 L61.0,12.7 L61.1,12.4 L61.1,12.1 L61.0,11.8 L60.9,11.5 L60.7,11.2 L60.5,10.9 L60.2,10.6 L59.9,10.3 L59.5,10.0 L59.0,9.7 L58.5,9.5 L58.0,9.2 L57.4,9.0 L56.7,8.7 L56.0,8.5 L55.3,8.3 L54.6,8.1 L53.8,7.9 L53.0,7.8 L52.1,7.6 L51.3,7.5 L50.4,7.4 L49.5,7.3 L48.6,7.3 L47.8,7.2 L46.9,7.2 L46.0,7.2 L45.1,7.3 L44.3,7.3 L43.5,7.4 L42.7,7.5 L41.9,7.6 L41.2,7.7 L40.5,7.9 L39.8,8.0 L39.2,8.2 L38.6,8.4 L38.1,8.6 L37.6,8.9 L37.1,9.1 L36.8,9.4 L36.5,9.6 L36.2,9.9 L36.0,10.2 L35.9,10.5 L35.8,10.8 L35.8,11.1 L35.8,11.4 L35.9,11.7 L36.1,12.0 L36.3,12.3 L36.6,12.6 L36.9,12.9 L37.3,13.2 L37.8,13.5 L38.3,13.8 L38.9,14.0 L39.5,14.3 L40.1,14.5 L40.8,14.7 L41.5,14.9 L42.3,15.1 L43.1,15.3 L43.9,15.4 L44.7,15.6 L45.6,15.7 L46.4,15.8 L47.3,15.9 L48.2,15.9" fill="none" stroke="#ffffff" stroke-width="1.15"/><polygon points="43.9,33.2 60.6,38.6 57.6,49.3 42.2,48.1" fill="#ffffff" stroke="#ffffff" stroke-width="4.5" stroke-linejoin="round"/><polygon points="62.2,38.8 85.4,19.4 97.1,21.1 78.2,42.7" fill="#ffffff" stroke="#ffffff" stroke-width="4.5" stroke-linejoin="round"/><polygon points="92.6,45.5 119.2,54.3 111.5,73.1 89.9,57.6" fill="#ffffff" stroke="#ffffff" stroke-width="4.5" stroke-linejoin="round"/><polygon points="57.0,58.9 74.3,64.8 85.0,76.7 66.0,67.0" fill="#ffffff" stroke="#ffffff" stroke-width="4.5" stroke-linejoin="round"/><polygon points="59.4,40.4 77.9,44.6 74.3,64.8 57.0,58.9" fill="#ffffff" stroke="#ffffff" stroke-width="4.5" stroke-linejoin="round"/><polygon points="77.9,44.6 91.0,42.2 90.4,57.1 74.3,64.8" fill="#ffffff" stroke="#ffffff" stroke-width="4.5" stroke-linejoin="round"/><polygon points="43.9,33.2 60.6,38.6 57.6,49.3 42.2,48.1" fill="#6e6e6e" stroke="#111" stroke-width="1" stroke-linejoin="round"/><polygon points="62.2,38.8 85.4,19.4 97.1,21.1 78.2,42.7" fill="#6e6e6e" stroke="#111" stroke-width="1" stroke-linejoin="round"/><polygon points="92.6,45.5 119.2,54.3 111.5,73.1 89.9,57.6" fill="#6e6e6e" stroke="#111" stroke-width="1" stroke-linejoin="round"/><polygon points="57.0,58.9 74.3,64.8 85.0,76.7 66.0,67.0" fill="#6e6e6e" stroke="#111" stroke-width="1" stroke-linejoin="round"/><polygon points="59.4,40.4 77.9,44.6 74.3,64.8 57.0,58.9" fill="#ffffff" stroke="#111" stroke-width="1" stroke-linejoin="round"/><polygon points="77.9,44.6 91.0,42.2 90.4,57.1 74.3,64.8" fill="#f4f4f4" stroke="#111" stroke-width="1" stroke-linejoin="round"/><line x1="56" y1="38" x2="54" y2="49" stroke="#333" stroke-width="0.8"/><line x1="77.5" y1="25.799999999999997" x2="91.5" y2="28" stroke="#333" stroke-width="1.2"/><line x1="104.29999999999995" y1="50.400000000000006" x2="100.39999999999998" y2="64.8" stroke="#333" stroke-width="1.2"/><line x1="81.2" y1="44.0" x2="78.3" y2="62.9" stroke="#999" stroke-width="0.6"/><line x1="84.5" y1="43.4" x2="82.3" y2="60.9" stroke="#999" stroke-width="0.6"/><line x1="87.7" y1="42.8" x2="86.4" y2="59.0" stroke="#999" stroke-width="0.6"/><text x="137.18" y="58.80" font-family="Liberation Sans" font-size="30" fill="#ffffff" stroke="#ffffff" stroke-width="1.2" textLength="18.66" lengthAdjust="spacingAndGlyphs">D</text><text x="156.94" y="58.80" font-family="Liberation Sans" font-size="30" fill="#ffffff" stroke="#ffffff" stroke-width="1.2" textLength="16.47" lengthAdjust="spacingAndGlyphs">e</text><text x="176.46" y="58.80" font-family="Liberation Sans" font-size="30" fill="#ffffff" stroke="#ffffff" stroke-width="1.2" textLength="6.67" lengthAdjust="spacingAndGlyphs">l</text><text x="185.63" y="58.80" font-family="Liberation Sans" font-size="30" fill="#ffffff" stroke="#ffffff" stroke-width="1.2" textLength="8.75" lengthAdjust="spacingAndGlyphs">f</text><text x="196.92" y="58.80" font-family="Liberation Sans" font-size="30" fill="#ffffff" stroke="#ffffff" stroke-width="1.2" textLength="6.67" lengthAdjust="spacingAndGlyphs">i</text><text x="205.34" y="58.80" font-family="Liberation Sans" font-size="30" fill="#ffffff" stroke="#ffffff" stroke-width="1.2" textLength="10.23" lengthAdjust="spacingAndGlyphs">-</text><text x="216.51" y="58.80" font-family="Liberation Sans" font-size="30" fill="#ffffff" stroke="#ffffff" stroke-width="1.2" textLength="18.36" lengthAdjust="spacingAndGlyphs">C</text><text x="236.28" y="43.40" font-family="Liberation Sans" font-size="15" fill="#ffffff" stroke="#ffffff" stroke-width="0.3" textLength="8.33" lengthAdjust="spacingAndGlyphs">3</text><text x="163" y="17.299999999999997" font-family="Liberation Sans" font-weight="bold" font-size="7" fill="#ffffff" stroke="#ffffff" stroke-width="0.35" textLength="88" lengthAdjust="spacingAndGlyphs">TUDELFT - DUTCH SPACE - TNO</text><text x="181" y="85.2" font-family="Liberation Sans" font-weight="bold" font-size="8" fill="#ffffff" stroke="#ffffff" stroke-width="0.35" textLength="50" lengthAdjust="spacingAndGlyphs">WWW.DELFIC3.NL</text></svg></body></html>
